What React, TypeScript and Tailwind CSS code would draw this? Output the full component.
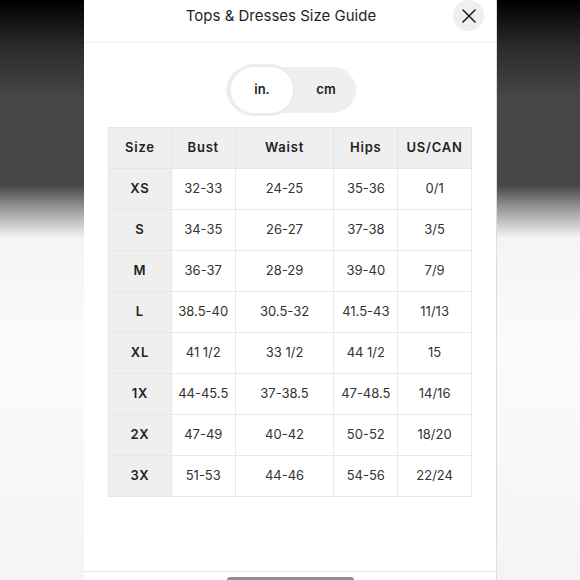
const columns = [
  { label: "Size", width: "w-[63px]" },
  { label: "Bust", width: "w-[64px]" },
  { label: "Waist", width: "w-[99px]" },
  { label: "Hips", width: "w-[64px]" },
  { label: "US/CAN", width: "w-[74px]" },
];

const rows = [
  ["XS", "32-33", "24-25", "35-36", "0/1"],
  ["S", "34-35", "26-27", "37-38", "3/5"],
  ["M", "36-37", "28-29", "39-40", "7/9"],
  ["L", "38.5-40", "30.5-32", "41.5-43", "11/13"],
  ["XL", "41 1/2", "33 1/2", "44 1/2", "15"],
  ["1X", "44-45.5", "37-38.5", "47-48.5", "14/16"],
  ["2X", "47-49", "40-42", "50-52", "18/20"],
  ["3X", "51-53", "44-46", "54-56", "22/24"],
];

const side =
  "bg-[linear-gradient(180deg,#000_0%,#2a2a2a_8%,#474747_17%,#474747_32%,#9a9a9a_36%,#f4f4f4_41%,#fbfbfb_60%,#f4f4f4_100%)]";

export default function App() {
  return (
    <div className="flex h-[580px] w-[580px] overflow-hidden font-['Inter',sans-serif] text-[#222]">
      <div className={`w-[84px] shrink-0 ${side}`} />

      <div className="flex w-[413px] shrink-0 flex-col border-r border-[#dcdcdc] bg-white">
        <div className="relative flex h-[43px] items-start justify-center border-b border-[#f0f0f0] pr-[18px] pt-[7px]">
          <h1 className="text-[15px] leading-[18px] text-[#1f1f1f]">Tops &amp; Dresses Size Guide</h1>
          <button className="absolute right-[12px] top-0 flex h-[31px] w-[31px] items-center justify-center rounded-full bg-[#efefef]">
            <svg width="16" height="16" viewBox="0 0 16 16" fill="none" stroke="#222" strokeWidth="1.6" strokeLinecap="round">
              <path d="M2 2 L14 14 M14 2 L2 14" />
            </svg>
          </button>
        </div>

        <div className="mt-[24px] flex justify-center pl-[2px]">
          <div className="flex h-[46px] w-[130px] items-center rounded-full bg-[#efefef]">
            <div className="ml-[2px] flex h-[52px] w-[68px] items-center justify-center rounded-full border-[3px] border-[#ececec] bg-white text-[13px] font-semibold">
              in.
            </div>
            <div className="flex flex-1 items-center justify-center text-[13px] font-semibold">cm</div>
          </div>
        </div>

        <div className="mx-[24px] mt-[14px] border-l border-t border-[#e8e8e8]">
          <div className="flex h-[41px] bg-[#efefef]">
            {columns.map((col) => (
              <div
                key={col.label}
                className={`${col.width} flex items-center justify-center border-b border-r border-[#e6e6e6] text-[13px] font-semibold tracking-[0.06em]`}
              >
                {col.label}
              </div>
            ))}
          </div>
          {rows.map((row) => (
            <div key={row[0]} className="flex h-[41px]">
              {row.map((cell, i) => (
                <div
                  key={i}
                  className={`${columns[i].width} flex items-center justify-center border-b border-r border-[#e8e8e8] text-[13px] ${
                    i === 0 ? "bg-[#efefef] font-semibold tracking-[0.06em]" : "text-[#333]"
                  }`}
                >
                  {cell}
                </div>
              ))}
            </div>
          ))}
        </div>

        <div className="flex-1" />

        <div className="flex h-[9px] justify-center border-t border-[#e6e6e6]">
          <div className="mt-[5px] h-[6px] w-[127px] rounded-t-[3px] bg-[#8f8f8f]" />
        </div>
      </div>

      <div className={`flex-1 ${side}`} />
    </div>
  );
}
